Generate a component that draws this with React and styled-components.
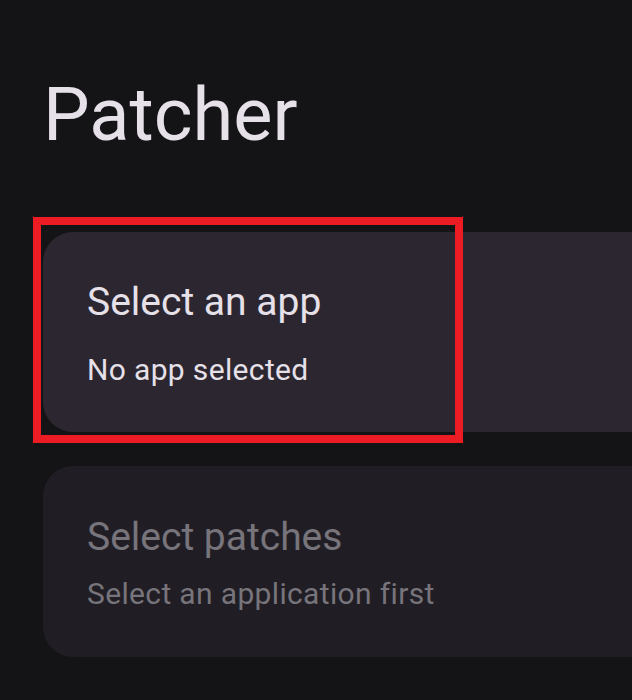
import React from "react";
import styled, { createGlobalStyle } from "styled-components";

const GlobalStyle = createGlobalStyle`
    html, body {
        margin: 0;
        padding: 0;
        background-color: #141316;
        overflow: hidden;
    }
    body {
        font-family: Roboto, "Noto Sans", sans-serif;
    }
`;

const Screen = styled.div`
    width: 632px;
    height: 700px;
    overflow: hidden;
    background-color: #141316;
    padding: 72px 0 0 43px;
    box-sizing: border-box;
    position: relative;
`;

const Title = styled.h1`
    margin: 0 0 0 0;
    font-size: 74px;
    font-weight: 400;
    line-height: 86px;
    color: #e6e0e9;
`;

const Cards = styled.div`
    display: flex;
    flex-direction: column;
    gap: 34px;
    margin-top: 74px;
    width: 720px;
`;

const Card = styled.div`
    position: relative;
    height: ${props => props.height}px;
    border-radius: 30px;
    background-color: ${props => (props.disabled ? "#201e24" : "#2b2630")};
    padding: ${props => props.top}px 44px 0 44px;
    box-sizing: border-box;
    display: flex;
    flex-direction: column;
    gap: ${props => props.gap}px;
`;

const CardTitle = styled.div`
    font-size: 39px;
    line-height: 48px;
    color: ${props => (props.disabled ? "#77747b" : "#e6e0e9")};
`;

const CardText = styled.div`
    font-size: 30px;
    line-height: 40px;
    letter-spacing: 0.35px;
    color: ${props => (props.disabled ? "#77747b" : "#e6e0e9")};
`;

const Highlight = styled.div`
    position: absolute;
    left: -10px;
    top: -15px;
    width: 430px;
    height: 226px;
    border: 8px solid #ed1c24;
    box-sizing: border-box;
    pointer-events: none;
`;

export default function App() {
    return (
        <>
            <GlobalStyle />
            <Screen>
                <Title>Patcher</Title>
                <Cards>
                    <Card height={200} top={46} gap={24}>
                        <CardTitle>Select an app</CardTitle>
                        <CardText>No app selected</CardText>
                        <Highlight />
                    </Card>
                    <Card height={191} top={47} gap={13} disabled>
                        <CardTitle disabled>Select patches</CardTitle>
                        <CardText disabled>Select an application first</CardText>
                    </Card>
                </Cards>
            </Screen>
        </>
    );
}
